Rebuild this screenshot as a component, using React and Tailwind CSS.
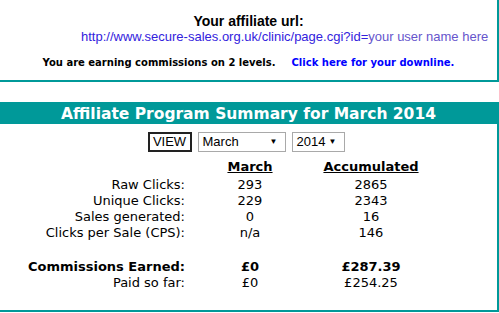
import React from "react";

const rows = [
  { label: "Raw Clicks:", month: "293", total: "2865" },
  { label: "Unique Clicks:", month: "229", total: "2343" },
  { label: "Sales generated:", month: "0", total: "16" },
  { label: "Clicks per Sale (CPS):", month: "n/a", total: "146" },
];

const SelectBox = ({ value, width }) => (
  <div
    className={`${width} h-[20px] border border-[#a9a9a9] bg-white flex items-center justify-between pl-[4px] pr-[7px] text-[13px] text-black`}
    style={{ fontFamily: '"Liberation Sans", Arial, sans-serif' }}
  >
    <span>{value}</span>
    <span className="text-[8px] leading-none">▼</span>
  </div>
);

export default function App() {
  const tahoma = { fontFamily: '"DejaVu Sans", Verdana, sans-serif' };
  const arial = { fontFamily: '"Liberation Sans", Arial, sans-serif' };

  return (
    <div className="w-[499px] h-[313px] bg-white overflow-hidden">
      {/* Affiliate url box */}
      <div className="-ml-[2px] -mt-[2px] w-[501px] h-[84px] border-2 border-[#009999] flex flex-col items-center">
        <div className="mt-[13px] text-[14px] leading-[16px] font-bold text-black" style={arial}>
          Your affiliate url:
        </div>
        <div className="self-start pl-[81px] text-[13px] leading-[16px] whitespace-nowrap" style={arial}>
          <span className="text-[#3322dd]">http://www.secure-sales.org.uk/clinic/page.cgi?id=</span>
          <span className="text-[#6655cc]">your user name here</span>
        </div>
        <div className="mt-[12px] flex gap-[16px] text-[10px] leading-[12px] font-bold whitespace-nowrap" style={tahoma}>
          <span className="text-black">You are earning commissions on 2 levels.</span>
          <span className="text-[#0000ff]">Click here for your downline.</span>
        </div>
      </div>

      {/* Summary box */}
      <div className="-ml-[2px] mt-[20px] w-[501px] h-[210px] border-2 border-[#009999] flex flex-col items-center">
        <div className="w-full h-[20px] bg-[#009999] flex items-center justify-center">
          <span className="text-white font-bold text-[15.5px] leading-[20px] whitespace-nowrap" style={tahoma}>
            Affiliate Program Summary for March 2014
          </span>
        </div>

        <div className="mt-[8px] flex items-center gap-[6px] pr-[5px]">
          <div className="w-[44px] h-[20px] border-2 border-[#222] flex items-center justify-center text-[13px] text-black" style={arial}>
            VIEW
          </div>
          <SelectBox value="March" width="w-[88px]" />
          <SelectBox value="2014" width="w-[53px]" />
        </div>

        <div className="self-start mt-[7px] grid grid-cols-[185px_130px_112px] text-[13px] text-black" style={tahoma}>
          <div className="h-[18px]" />
          <div className="h-[18px] leading-[16px] text-center font-bold underline">March</div>
          <div className="h-[18px] leading-[16px] text-center font-bold underline">Accumulated</div>
          {rows.map((r) => (
            <React.Fragment key={r.label}>
              <div className="h-[16px] leading-[16px] text-right whitespace-nowrap">{r.label}</div>
              <div className="h-[16px] leading-[16px] text-center">{r.month}</div>
              <div className="h-[16px] leading-[16px] text-center">{r.total}</div>
            </React.Fragment>
          ))}
          <div className="h-[18px] col-span-3" />
          <div className="h-[16px] leading-[16px] text-right font-bold whitespace-nowrap">Commissions Earned:</div>
          <div className="h-[16px] leading-[16px] text-center font-bold">£0</div>
          <div className="h-[16px] leading-[16px] text-center font-bold">£287.39</div>
          <div className="h-[16px] leading-[16px] text-right whitespace-nowrap">Paid so far:</div>
          <div className="h-[16px] leading-[16px] text-center">£0</div>
          <div className="h-[16px] leading-[16px] text-center">£254.25</div>
        </div>
      </div>
    </div>
  );
}
